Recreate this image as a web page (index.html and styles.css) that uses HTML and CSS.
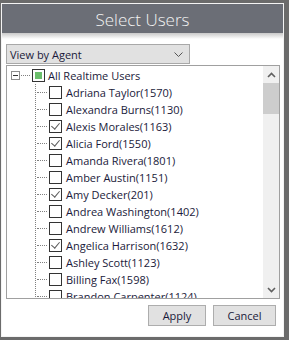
FILE: index.html
```html
<!DOCTYPE html>
<html lang="en">
<head>
    <meta charset="UTF-8">
    <title>Select Users</title>
    <link rel="stylesheet" href="styles.css">
</head>
<body>
    <div class="dialog">
        <div class="dialog-title">Select Users</div>
        <div class="dialog-body">
            <div class="dropdown">
                <span>View by Agent</span>
                <svg class="chevron" width="9" height="5" viewBox="0 0 9 5"><path d="M0.5 0.5 L4.5 4.5 L8.5 0.5" fill="none" stroke="#555" stroke-width="1"/></svg>
            </div>

            <div class="tree">
                <div class="tree-list">
                    <div class="row root">
                        <span class="expander"><span class="minus"></span></span>
                        <span class="root-dots"></span>
                        <span class="box partial"><span class="fill"></span></span>
                        <span class="label">All Realtime Users</span>
                    </div>
                    <div class="children">
                        <div class="row"><span class="dots"></span><span class="box"></span><span class="label">Adriana Taylor(1570)</span></div>
                        <div class="row"><span class="dots"></span><span class="box"></span><span class="label">Alexandra Burns(1130)</span></div>
                        <div class="row"><span class="dots"></span><span class="box checked"></span><span class="label">Alexis Morales(1163)</span></div>
                        <div class="row"><span class="dots"></span><span class="box checked"></span><span class="label">Alicia Ford(1550)</span></div>
                        <div class="row"><span class="dots"></span><span class="box"></span><span class="label">Amanda Rivera(1801)</span></div>
                        <div class="row"><span class="dots"></span><span class="box"></span><span class="label">Amber Austin(1151)</span></div>
                        <div class="row"><span class="dots"></span><span class="box checked"></span><span class="label">Amy Decker(201)</span></div>
                        <div class="row"><span class="dots"></span><span class="box"></span><span class="label">Andrea Washington(1402)</span></div>
                        <div class="row"><span class="dots"></span><span class="box"></span><span class="label">Andrew Williams(1612)</span></div>
                        <div class="row"><span class="dots"></span><span class="box checked"></span><span class="label">Angelica Harrison(1632)</span></div>
                        <div class="row"><span class="dots"></span><span class="box"></span><span class="label">Ashley Scott(1123)</span></div>
                        <div class="row"><span class="dots"></span><span class="box"></span><span class="label">Billing Fax(1598)</span></div>
                        <div class="row"><span class="dots"></span><span class="box"></span><span class="label">Brandon Carpenter(1124)</span></div>
                    </div>
                </div>
                <div class="scrollbar">
                    <div class="arrow"><svg width="9" height="6" viewBox="0 0 9 6"><path d="M1 5 L4.5 1.5 L8 5" fill="none" stroke="#606060" stroke-width="1.6"/></svg></div>
                    <div class="thumb"></div>
                    <div class="track"></div>
                    <div class="arrow"><svg width="9" height="6" viewBox="0 0 9 6"><path d="M1 1 L4.5 4.5 L8 1" fill="none" stroke="#606060" stroke-width="1.6"/></svg></div>
                </div>
            </div>

            <div class="buttons">
                <button class="btn apply">Apply</button>
                <button class="btn cancel">Cancel</button>
            </div>
        </div>
    </div>
</body>
</html>
```

FILE: styles.css
```css
body {
    margin: 0;
    background: #6b6b6b;
    font-family: "Open Sans", "Noto Sans", sans-serif;
    font-size: 11px;
    color: #1a1a3a;
}

.dialog {
    margin: 3px 0 0 1px;
    width: 281px;
    height: 332px;
    border: 1px solid #f4f4f4;
    background: #ffffff;
    display: flex;
    flex-direction: column;
}

.dialog-title {
    height: 28px;
    background: #6b6e76;
    color: #f2f2f2;
    font-size: 17px;
    font-weight: 300;
    display: flex;
    align-items: center;
    justify-content: center;
    padding-top: 1px;
}

.dialog-body {
    flex: 1;
    background: linear-gradient(#c9c9c9, #ffffff 6px);
    padding: 11px 0 0 4px;
}

/* dropdown */
.dropdown {
    height: 18px;
    width: 179px;
    background: #e1e1e1;
    border: 1px solid #a8a8a8;
    display: flex;
    align-items: center;
    justify-content: space-between;
    padding: 0 0 0 3px;
}

.dropdown .chevron {
    margin-right: 6px;
}

/* tree */
.tree {
    margin-top: 1px;
    width: 272px;
    height: 232px;
    border: 1px solid #a0a0a0;
    display: flex;
    background: #fff;
}

.tree-list {
    flex: 1;
    overflow: hidden;
    padding-top: 1px;
}

.row {
    height: 17px;
    display: flex;
    align-items: center;
    white-space: nowrap;
}

.expander {
    width: 9px;
    height: 9px;
    margin-left: 4px;
    border: 1px solid #8e8e8e;
    box-sizing: border-box;
    display: flex;
    align-items: center;
    justify-content: center;
}

.minus {
    width: 5px;
    height: 1px;
    background: #333;
}

.root-dots {
    width: 9px;
    margin: 0 2px 0 1px;
    border-top: 1px dotted #808080;
}

.box {
    width: 13px;
    height: 13px;
    border: 1px solid #333;
    box-sizing: border-box;
    background: #fff;
    flex: none;
    position: relative;
}

.box.partial {
    padding: 2px;
}

.box .fill {
    display: block;
    width: 100%;
    height: 100%;
    background: #6cbf6c;
}

.box.checked::after {
    content: "";
    position: absolute;
    left: 3px;
    top: 0px;
    width: 4px;
    height: 7px;
    border-right: 1.5px solid #5a5a5a;
    border-bottom: 1.5px solid #5a5a5a;
    transform: rotate(40deg);
}

.label {
    margin-left: 3px;
}

.children {
    margin-left: 28px;
    border-left: 1px dotted #808080;
}

.children .row .dots {
    width: 10px;
    margin: 0 2px 0 1px;
    border-top: 1px dotted #808080;
}

.children .label {
    margin-left: 4px;
}

/* scrollbar */
.scrollbar {
    width: 16px;
    background: #f0f0f0;
    display: flex;
    flex-direction: column;
}

.arrow {
    height: 17px;
    display: flex;
    align-items: center;
    justify-content: center;
}

.thumb {
    height: 31px;
    background: #cdcdcd;
}

.track {
    flex: 1;
}

/* buttons */
.buttons {
    display: flex;
    justify-content: flex-end;
    gap: 7px;
    padding: 6px 7px 0 0;
}

.btn {
    height: 21px;
    padding: 0;
    background: #e1e1e1;
    border: 1px solid #adadad;
    font-family: "Open Sans", "Noto Sans", sans-serif;
    font-size: 11px;
    color: #1a1a3a;
}

.apply {
    width: 58px;
}

.cancel {
    width: 63px;
}
```
